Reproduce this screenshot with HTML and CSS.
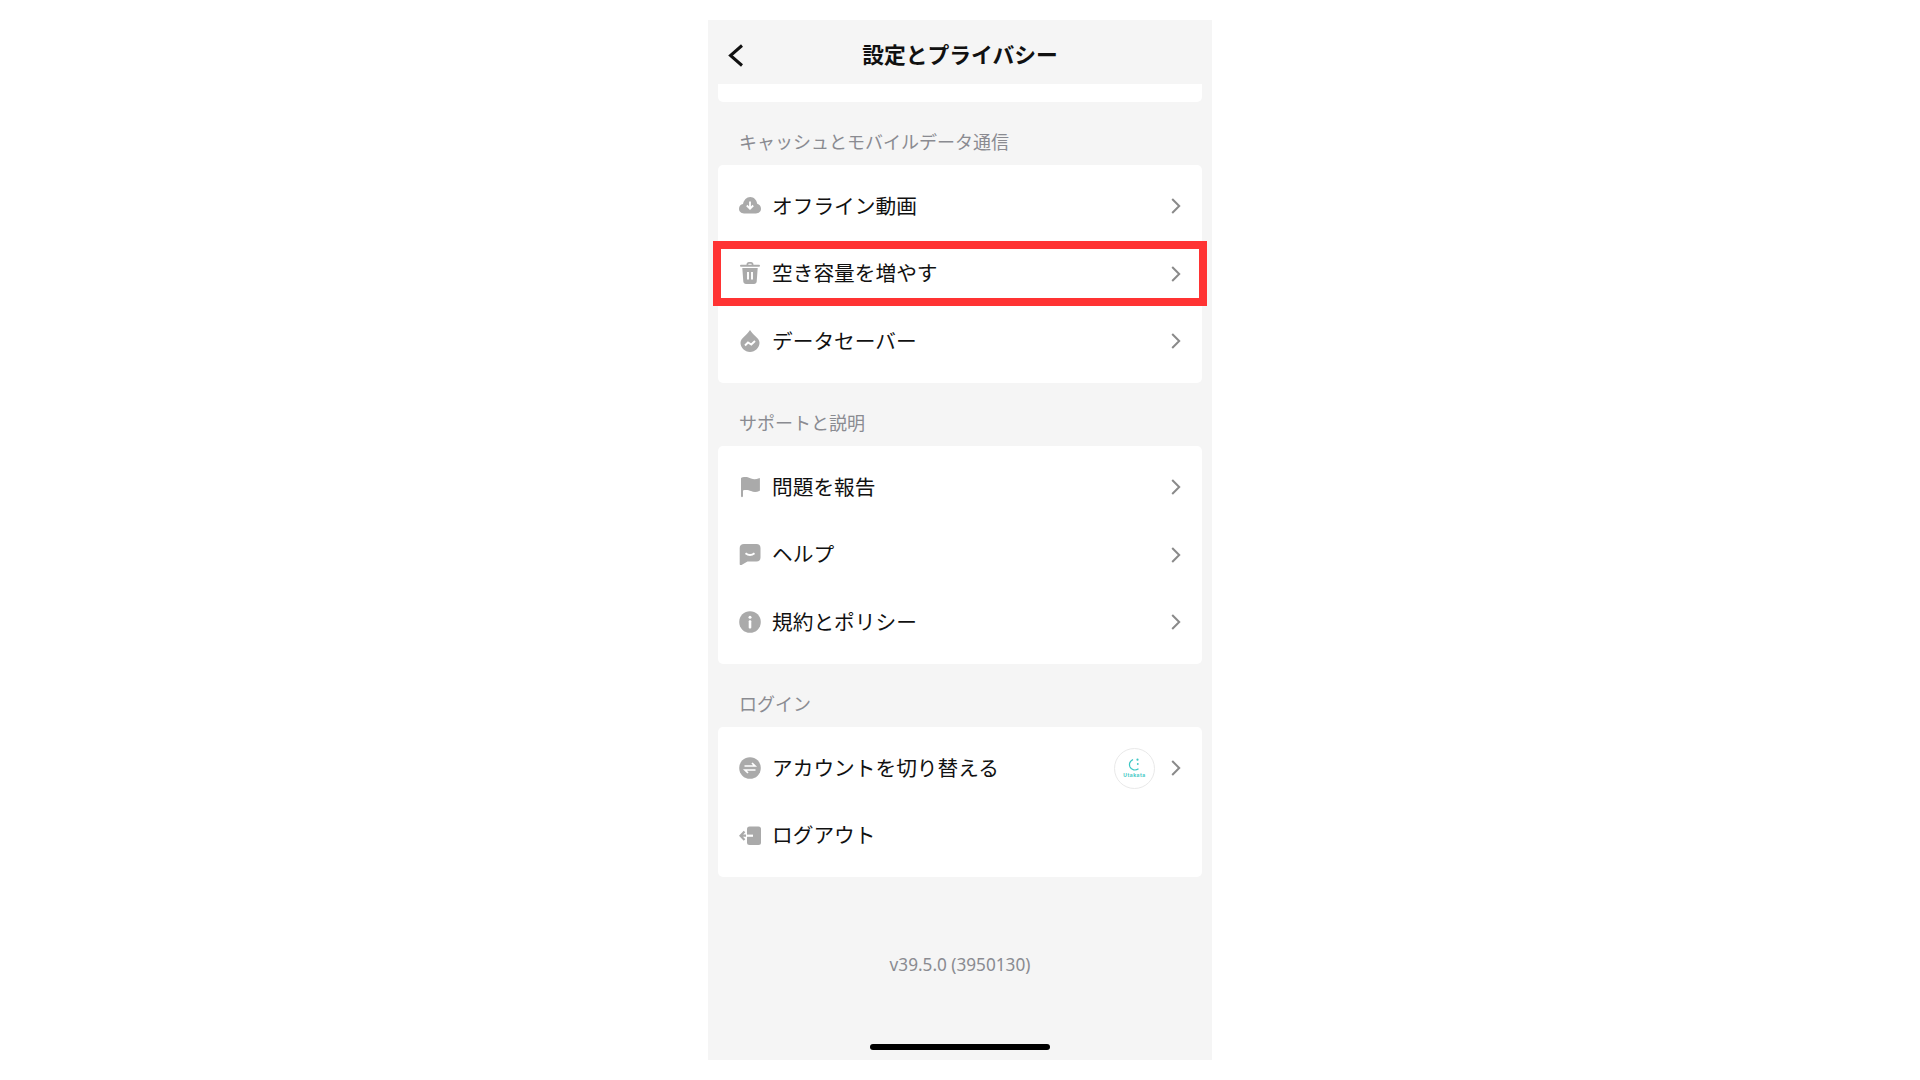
FILE: index.html
```html
<!DOCTYPE html>
<html lang="ja">
<head>
  <meta charset="UTF-8">
  <title>設定とプライバシー</title>
  <link rel="stylesheet" href="styles.css">
</head>
<body>
<div class="phone">
  <div class="header">
    <svg class="btn-voltar" width="16" height="24" viewBox="0 0 16 24"><path d="M14 1.500 2.500 11.500 14 21.500" fill="none" stroke="#111" stroke-width="3"/></svg>
    <h1>設定とプライバシー</h1>
  </div>

  <div class="card card-topo"></div>

  <h2>キャッシュとモバイルデータ通信</h2>
  <div class="card">
    <div class="row">
      <svg class="icon" viewBox="0 0 22 22"><path class="cinza" d="M5 18.500C2.200 18.500 0 16.500 0 13.800c0-2.400 1.700-4.300 4-4.700C4.700 5.200 7.600 2 11.300 2c3.500 0 6.400 2.900 6.900 6.800 2.300.5 3.800 2.500 3.800 5 0 2.700-2.200 4.700-5 4.700z"/><path d="M11 6.500v7M7.800 10.500l3.200 3.200 3.200-3.200" fill="none" stroke="#fff" stroke-width="1.800"/></svg>
      <span class="texto">オフライン動画</span>
      <svg class="seta" width="10" height="16" viewBox="0 0 10 16"><path d="M1.200 1 8.200 8l-7 7"/></svg>
    </div>
    <div class="row">
      <div class="destaque"></div>
      <svg class="icon" viewBox="0 0 22 22"><path class="cinza" d="M7.500 2.800C7.500 1 8.500 0 10 0h2c1.500 0 2.500 1 2.500 2.800H20a.9.9 0 0 1 0 2H2a.9.9 0 0 1 0-2zM9.300 2.800h3.400c0-.8-.3-1.100-.8-1.100h-1.800c-.5 0-.8.300-.8 1.100zM3.300 6h15.400l-1 13.500c-.1 1.500-1.200 2.500-2.700 2.500H7c-1.500 0-2.600-1-2.700-2.500z"/><path d="M9 10v7.500M13 10v7.500" fill="none" stroke="#fff" stroke-width="1.900"/></svg>
      <span class="texto">空き容量を増やす</span>
      <svg class="seta" width="10" height="16" viewBox="0 0 10 16"><path d="M1.200 1 8.200 8l-7 7"/></svg>
    </div>
    <div class="row">
      <svg class="icon" viewBox="0 0 22 22"><path class="cinza" d="M11 0c1.300 2.400 3 3.700 5.200 5.900 2.600 2.300 4.300 4 4.300 6.900 0 5-4.300 9.200-9.500 9.200s-9.500-4.200-9.500-9.200c0-2.900 1.700-4.600 4.300-6.900C8 3.700 9.700 2.400 11 0z"/><path d="M6 15.500l3-3 3.300 2 3.700-3.500" fill="none" stroke="#fff" stroke-width="1.900"/></svg>
      <span class="texto">データセーバー</span>
      <svg class="seta" width="10" height="16" viewBox="0 0 10 16"><path d="M1.200 1 8.200 8l-7 7"/></svg>
    </div>
  </div>

  <h2>サポートと説明</h2>
  <div class="card">
    <div class="row">
      <svg class="icon" viewBox="0 0 22 22"><path class="cinza" d="M2 2.500C2 1.800 3 1.300 5 1.100c3-.3 5 .4 7 1.400 2.500 1 5 1 8-.3.500-.2.900 0 .9.500v11.500c0 .5-.2.700-.6.900-3 1.300-5.800 1.100-8.300 0-2-.9-5-1.500-8-.7v5.700c0 .7-.4 1.100-1 1.100s-1-.4-1-1.100z"/></svg>
      <span class="texto">問題を報告</span>
      <svg class="seta" width="10" height="16" viewBox="0 0 10 16"><path d="M1.200 1 8.200 8l-7 7"/></svg>
    </div>
    <div class="row">
      <svg class="icon" viewBox="0 0 22 22"><path class="cinza" d="M5 1h12.500C20 1 21.500 2.500 21.500 5v9.500c0 2.500-1.500 4-4 4H8.500l-6 3.500c-1 .6-1.800.2-1.800-1V5C.7 2.500 2.500 1 5 1z"/><path d="M6.500 10.200c2.800 2.200 6.200 2.200 9 0" fill="none" stroke="#fff" stroke-width="2"/></svg>
      <span class="texto">ヘルプ</span>
      <svg class="seta" width="10" height="16" viewBox="0 0 10 16"><path d="M1.200 1 8.200 8l-7 7"/></svg>
    </div>
    <div class="row">
      <svg class="icon" viewBox="0 0 22 22"><circle class="cinza" cx="11" cy="11" r="10.800"/><circle cx="11" cy="6.300" r="1.500" fill="#fff"/><rect x="9.700" y="9.300" width="2.600" height="8.200" rx="1" fill="#fff"/></svg>
      <span class="texto">規約とポリシー</span>
      <svg class="seta" width="10" height="16" viewBox="0 0 10 16"><path d="M1.200 1 8.200 8l-7 7"/></svg>
    </div>
  </div>

  <h2>ログイン</h2>
  <div class="card">
    <div class="row">
      <svg class="icon" viewBox="0 0 22 22"><circle class="cinza" cx="11" cy="11" r="10.800"/><path d="M5.500 9h10.500l-3-3M16.500 13H6l3 3" fill="none" stroke="#fff" stroke-width="1.700"/></svg>
      <span class="texto">アカウントを切り替える</span>
      <div class="avatar">
        <svg width="14" height="14" viewBox="0 0 14 14"><path d="M5 1.500C2.300 3 .8 6 2 9c1.300 3 5.500 4 8.500 1.800" fill="none" stroke="#3cc7c4" stroke-width="1.200"/><circle cx="9.500" cy="1.700" r="1.100" fill="#3cc7c4"/><circle cx="9.800" cy="6" r=".9" fill="#3cc7c4"/></svg>
        <span>Utakata</span>
      </div>
      <svg class="seta" width="10" height="16" viewBox="0 0 10 16"><path d="M1.200 1 8.200 8l-7 7"/></svg>
    </div>
    <div class="row">
      <svg class="icon" viewBox="0 0 22 22"><rect class="cinza" x="8" y="2.500" width="14" height="18.500" rx="2.500"/><path d="M8 11.700h6" fill="none" stroke="#fff" stroke-width="2.200"/><path d="M5.500 7.500 1.500 11.700l4 4.200M1.500 11.700h5.500" fill="none" stroke="#aaa" stroke-width="2.200"/></svg>
      <span class="texto">ログアウト</span>
    </div>
  </div>

  <p class="versao">v39.5.0 (3950130)</p>
  <div class="home-bar"></div>
</div>
</body>
</html>
```

FILE: styles.css
```css
body {
  margin: 0;
  background-color: #fff;
  font-family: 'Noto Sans CJK JP', 'Noto Sans', sans-serif;
  color: #111;
}

.phone {
  width: 504px;
  height: 1040px;
  margin: 20px auto;
  padding: 0 10px;
  box-sizing: border-box;
  background-color: #f5f5f5;
  display: flex;
  flex-direction: column;
}

.header {
  position: relative;
  height: 64px;
  box-sizing: border-box;
  display: flex;
  justify-content: center;
  align-items: center;
}

.header h1 {
  margin: 3px 0 0;
  font-size: 21.8px;
  font-weight: 700;
}

.btn-voltar {
  position: absolute;
  left: 10px;
  top: 24px;
}

.card {
  background-color: #fff;
  border-radius: 5px;
  padding: 7px 0 8px;
}

.card-topo {
  height: 17.5px;
  padding: 0;
  border-radius: 0 0 5px 5px;
}

h2 {
  margin: 0;
  padding: 26.5px 0 11px 21px;
  font-size: 18px;
  line-height: 26px;
  font-weight: 400;
  color: #8a8b91;
}

.row {
  position: relative;
  height: 67.5px;
  padding: 0 21px;
  display: flex;
  align-items: center;
}

.icon {
  width: 22px;
  height: 22px;
  margin-right: 11px;
  flex-shrink: 0;
}

.cinza {
  fill: #aaa;
}

.texto {
  flex: 1;
  margin-bottom: 2px;
  font-size: 20.7px;
}

.seta {
  flex-shrink: 0;
  margin-top: 1px;
}

.seta path {
  fill: none;
  stroke: #8a8a8a;
  stroke-width: 2;
}

.destaque {
  position: absolute;
  top: 1.5px;
  bottom: 1px;
  left: -5px;
  right: -5px;
  border: 8px solid #ff3333;
}

.avatar {
  width: 41px;
  height: 41px;
  margin: 1px 16px 0 0;
  box-sizing: border-box;
  border: 1px solid #e9e9e9;
  border-radius: 50%;
  display: flex;
  flex-direction: column;
  align-items: center;
  justify-content: center;
  color: #3cc7c4;
}

.avatar span {
  font-family: 'Inter', sans-serif;
  font-size: 5px;
  line-height: 6px;
  font-weight: 700;
  letter-spacing: .5px;
}

.versao {
  margin: 75px 0 0;
  text-align: center;
  font-family: 'Noto Sans', sans-serif;
  font-size: 17.2px;
  line-height: 26px;
  color: #8a8b91;
}

.home-bar {
  width: 180px;
  height: 6px;
  margin: auto auto 10px;
  border-radius: 3px;
  background-color: #000;
}
```
